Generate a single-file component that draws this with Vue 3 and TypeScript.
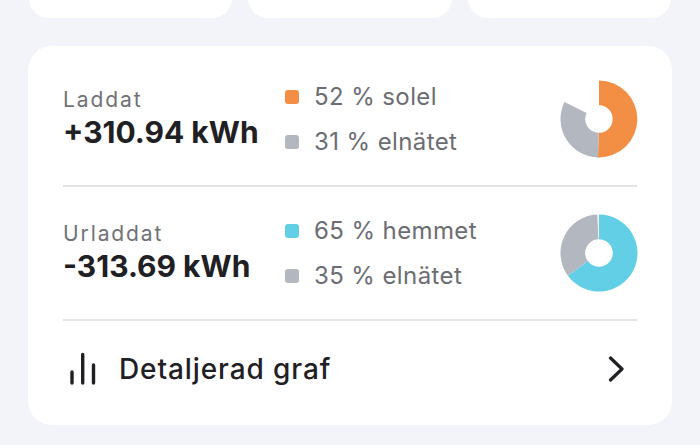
<script setup lang="ts">
interface Slice {
  from: number
  to: number
  color: string
}

interface LegendItem {
  text: string
  color: string
}

interface StatRow {
  label: string
  value: string
  legend: LegendItem[]
  slices: Slice[]
}

const ORANGE = '#f28f45'
const GRAY = '#b3b7bf'
const BLUE = '#62cfe6'

const rows: StatRow[] = [
  {
    label: 'Laddat',
    value: '+310.94 kWh',
    legend: [
      { text: '52 % solel', color: ORANGE },
      { text: '31 % elnätet', color: GRAY }
    ],
    slices: [
      { from: 0, to: 181.5, color: ORANGE },
      { from: 181.5, to: 296, color: GRAY }
    ]
  },
  {
    label: 'Urladdat',
    value: '-313.69 kWh',
    legend: [
      { text: '65 % hemmet', color: BLUE },
      { text: '35 % elnätet', color: GRAY }
    ],
    slices: [
      { from: 0, to: 234, color: BLUE },
      { from: 234, to: 357.5, color: GRAY }
    ]
  }
]

// ring slice, angles in degrees clockwise from 12 o'clock
const slicePath = (s: Slice) => {
  const R = 38.5
  const r = 13.8
  const pt = (rad: number, deg: number) => {
    const a = (deg * Math.PI) / 180
    return `${(40 + rad * Math.sin(a)).toFixed(2)} ${(40 - rad * Math.cos(a)).toFixed(2)}`
  }
  const large = s.to - s.from > 180 ? 1 : 0
  return `M${pt(R, s.from)}A${R} ${R} 0 ${large} 1 ${pt(R, s.to)}L${pt(r, s.to)}A${r} ${r} 0 ${large} 0 ${pt(r, s.from)}Z`
}
</script>

<template>
  <div class="page">
    <div class="top-cards">
      <div class="top-card"></div>
      <div class="top-card"></div>
      <div class="top-card"></div>
    </div>

    <div class="card">
      <div v-for="row in rows" :key="row.label" class="stat-row">
        <div class="totals">
          <div class="label">{{ row.label }}</div>
          <div class="value">{{ row.value }}</div>
        </div>
        <div class="legend">
          <div v-for="item in row.legend" :key="item.text" class="legend-item">
            <span class="swatch" :style="{ background: item.color }"></span>
            <span>{{ item.text }}</span>
          </div>
        </div>
        <svg class="donut" width="80" height="80" viewBox="0 0 80 80">
          <path v-for="s in row.slices" :key="s.from" :d="slicePath(s)" :fill="s.color" />
        </svg>
      </div>

      <div class="graph-link">
        <svg class="bars" width="28" height="34" viewBox="0 0 28 34" fill="none" stroke="#1f2023" stroke-width="3.4" stroke-linecap="round">
          <path d="M3 20V31M13.700 2.500V31M24.500 13V31" />
        </svg>
        <span class="graph-text">Detaljerad graf</span>
        <svg class="chevron" width="16" height="26" viewBox="0 0 16 26" fill="none" stroke="#1f2023" stroke-width="3.2" stroke-linecap="round" stroke-linejoin="round">
          <path d="M2.500 2L14 13L2.500 24" />
        </svg>
      </div>
    </div>
  </div>
</template>

<style>
html,
body {
  background: #f3f4f9;
}
</style>

<style scoped>
.page {
  width: 700px;
  height: 445px;
  overflow: hidden;
  box-sizing: border-box;
  padding: 0 28px;
  background: #f3f4f9;
  font-family: Inter, Lato, sans-serif;
}

.top-cards {
  display: flex;
  gap: 16px;
  margin-top: -42px;
  padding: 0 1px;
}

.top-card {
  flex: 1;
  height: 60px;
  background: #fff;
  border-radius: 20px;
}

.card {
  margin-top: 28px;
  height: 379px;
  box-sizing: border-box;
  padding: 0 35px;
  background: #fff;
  border-radius: 24px;
}

.stat-row {
  display: flex;
  align-items: center;
  height: 134px;
  border-bottom: 2px solid #e3e4e6;
  box-sizing: border-box;
}

.stat-row:first-child {
  height: 141px;
  padding-top: 6px;
}

.stat-row:first-child .legend {
  padding-top: 2px;
}

.totals {
  width: 222px;
  flex-shrink: 0;
  padding-bottom: 2px;
}

.label {
  margin-bottom: 2px;
  font-size: 21px;
  line-height: 26px;
  letter-spacing: 1.9px;
  color: #6f7175;
}

.value {
  font-size: 30px;
  line-height: 34px;
  font-weight: 700;
  color: #1f2023;
}

.legend {
  flex: 1;
  display: flex;
  flex-direction: column;
  gap: 17px;
}

.legend-item {
  display: flex;
  align-items: center;
  gap: 15px;
  font-size: 24px;
  line-height: 28px;
  letter-spacing: 0.4px;
  color: #6b6d72;
}

.swatch {
  width: 14px;
  height: 14px;
  border-radius: 3px;
}

.donut {
  margin-right: -2px;
}

.graph-link {
  display: flex;
  align-items: center;
  height: 102px;
  padding-bottom: 6px;
  box-sizing: border-box;
}

.bars {
  margin-left: 6px;
  margin-right: 22px;
}

.graph-text {
  flex: 1;
  font-size: 28px;
  font-weight: 500;
  letter-spacing: 0.9px;
  color: #1f2023;
}

.chevron {
  margin-right: 13px;
}
</style>
